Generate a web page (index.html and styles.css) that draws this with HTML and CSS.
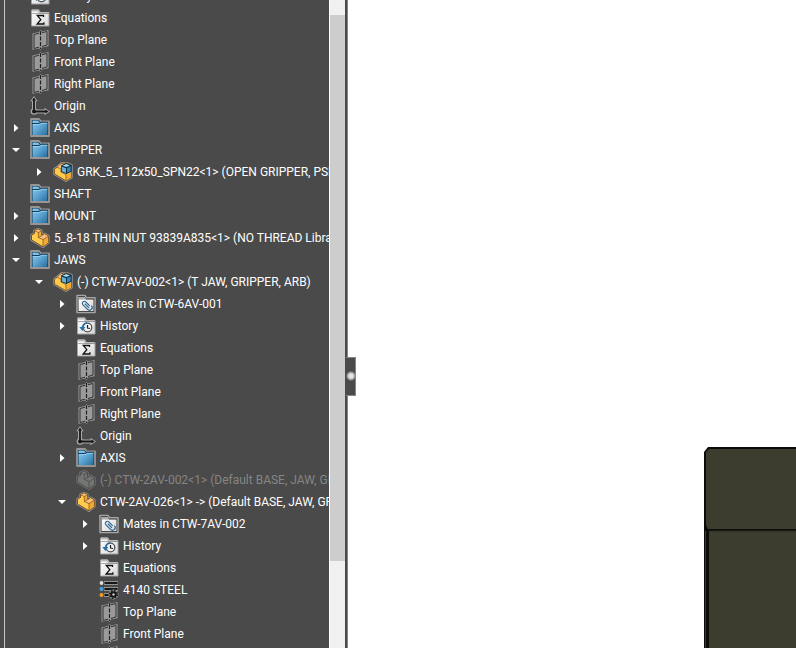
FILE: index.html
```html
<!DOCTYPE html>
<html lang="en">
<head>
<meta charset="utf-8">
<title>Assembly</title>
<link rel="stylesheet" href="styles.css">
</head>
<body>
<svg class="defs" aria-hidden="true">
  <defs>
    <linearGradient id="blue" x1="0" y1="0" x2="1" y2="1">
      <stop offset="0" stop-color="#8fcdf0"/><stop offset=".5" stop-color="#5aa3d0"/><stop offset="1" stop-color="#2b6c9c"/>
    </linearGradient>
    <linearGradient id="paper" x1="0" y1="0" x2="1" y2="1">
      <stop offset="0" stop-color="#ffffff"/><stop offset="1" stop-color="#d8d8d8"/>
    </linearGradient>
    <symbol id="right" viewBox="0 0 8 10"><path d="M2 1l4.500 4L2 9z" fill="#fff"/></symbol>
    <symbol id="down" viewBox="0 0 8 10"><path d="M0 3h8L4 7z" fill="#fff"/></symbol>
    <symbol id="folder" viewBox="0 0 20 20">
      <path d="M1 1h8l2 2.500h8V18H1z" fill="#0c2c44" stroke="#969696" stroke-width="1.800" stroke-linejoin="round"/>
      <path d="M2.500 2.500h5.800L10 5h7.500v12h-15z" fill="url(#blue)"/>
      <path d="M2 5.500h7.500l1.500-1.300h7" fill="none" stroke="#123d5b"/>
      <path d="M3 6.500h7l1.300-1.200h6" fill="none" stroke="#a4dbf6" stroke-width=".7"/>
    </symbol>
    <symbol id="sheet" viewBox="0 0 20 20">
      <path d="M1.500 2h7l1.500 2.500h9V18H1.500z" fill="url(#paper)" stroke="#a2a2a2"/>
      <path d="M2 2.500h6.300L10 5h8.500" fill="none" stroke="#bcbcbc" stroke-width="2"/>
      <path d="M2 5.500h17" stroke="#858585" stroke-width=".7"/>
    </symbol>
    <symbol id="equations" viewBox="0 0 20 20">
      <use href="#sheet"/>
      <path d="M13.500 9V7.500H7.300l3.500 4.200-3.700 4.300h6.800v-1.700" fill="none" stroke="#111" stroke-width="1.300"/>
    </symbol>
    <symbol id="history" viewBox="0 0 20 20">
      <use href="#sheet"/>
      <circle cx="11.500" cy="11.500" r="4.300" fill="#f4f4f4" stroke="#4a5359" stroke-width="1.300"/>
      <path d="M6.800 13A4.800 4.800 0 0 1 11 6.700" fill="none" stroke="#2874a8" stroke-width="1.600"/>
      <path d="M3.300 11h6l-3 4z" fill="#2874a8"/>
      <path d="M11.500 9v3l2.500.5" fill="none" stroke="#222" stroke-width="1.200"/>
    </symbol>
    <symbol id="mates" viewBox="0 0 20 20">
      <path d="M1 1.500h8l1.500 2.300H19V18.500H1z" fill="#292929" stroke="#a6a6a6" stroke-width="1.500" stroke-linejoin="round"/>
      <path d="M2.500 3h6L10 5.500h7.500V17h-15z" fill="url(#paper)"/>
      <path d="M2.500 3h6L10 5.500H3z" fill="#aaa"/>
      <g fill="none" stroke="#24608e" stroke-width="1.100" transform="rotate(45 10.500 11.500)">
        <path d="M13 9.500H7.500a2 2 0 0 0 0 4h6.500a2.700 2.700 0 0 0 0-5.400M14 11.500H8"/>
      </g>
    </symbol>
    <symbol id="plane" viewBox="0 0 20 20">
      <path d="M2.500 3.500L9 2l1.500-2L12 1.500 18.500 0v16.300L12 17.500 10.500 20 9 18.500l-6.500 1.300z" fill="#9a9a9a"/>
      <path d="M9 3.300L4 4.500v14l5-1.300M12 2.700l5-1.200v13.500l-5 1.500" fill="none" stroke="#303030"/>
      <path d="M10.500 1v18" stroke="#202020" stroke-width="1.200" stroke-dasharray="4 1.500"/>
    </symbol>
    <symbol id="origin" viewBox="0 0 20 20">
      <path d="M4 4v11.500h12" fill="none" stroke="#a8a8a8" stroke-width="4" stroke-linejoin="round"/>
      <path d="M4 0L.300 5.200h7.400zM20 15.500l-5.500-3.700v7.400z" fill="#a8a8a8"/>
      <circle cx="4" cy="15.500" r="3.300" fill="#a8a8a8"/>
      <path d="M4 4v11.500h12" fill="none" stroke="#171717" stroke-width="1.800"/>
      <path d="M4 1.600L2 4.500h4zM18.500 15.500l-3-2v4z" fill="#171717"/>
      <circle cx="4" cy="15.500" r="2" fill="#171717"/>
    </symbol>
    <symbol id="part" viewBox="0 0 20 20">
      <path d="M1.500 7L4.500 5.500V2.500L8 1l3.500 1.500V7l3-1.300 4 2.300v6.500L13 18.800 1.500 12z" fill="#ffcb4d" stroke="#999" stroke-width="2.200" stroke-linejoin="round"/>
      <path d="M1.500 7L4.500 5.500V2.500L8 1l3.500 1.500V7l3-1.300 4 2.300v6.500L13 18.800 1.500 12z" fill="#ffcb4d" stroke="#6b4314" stroke-width=".9" stroke-linejoin="round"/>
      <path d="M5 2.800l3-1.300 3 1.300-2.700 1.600zM9 9.500l5.300-3.200L18 8.300l-5 3.200z" fill="#f7bd83"/>
      <path d="M8.300 4.500l3-1.500v4.500L8.300 9.300zM13 11.700l5.200-3.400v6L13 18.400z" fill="#efaa35"/>
      <path d="M4.700 2.700l3.600 1.900v4.900L13 11.600v6.800M8.300 4.600l3.200-1.800M13 11.600l5.200-3.300M8.500 9.500l5-3" fill="none" stroke="#7b4c17" stroke-width=".7"/>
    </symbol>
    <symbol id="ghost" viewBox="0 0 20 20">
      <path d="M1.500 7L4.500 5.500V2.500L8 1l3.500 1.500V7l3-1.300 4 2.300v6.500L13 18.800 1.500 12z" fill="#737673" stroke="#777" stroke-width="2.200" stroke-linejoin="round"/>
      <path d="M1.500 7L4.500 5.500V2.500L8 1l3.500 1.500V7l3-1.300 4 2.300v6.500L13 18.800 1.500 12z" fill="#737673" stroke="#484848" stroke-width=".9" stroke-linejoin="round"/>
      <path d="M4.700 2.700l3.600 1.900v4.900L13 11.600v6.800M8.300 4.600l3.200-1.800M13 11.600l5.200-3.300M8.500 9.500l5-3" fill="none" stroke="#4b4b4b" stroke-width=".8"/>
    </symbol>
    <symbol id="assembly" viewBox="0 0 20 20">
      <path d="M1.500 7L4.500 5 8.500 1.500l5-.5L18.500 3v12.500L13 18.800 1.500 12z" fill="#ffcb4d" stroke="#999" stroke-width="2.400" stroke-linejoin="round"/>
      <path d="M1.500 7L4.500 5 8.500 1.500l5-.5L18.500 3v12.500L13 18.800 1.500 12z" fill="#ffcb4d" stroke="#6b4314" stroke-width=".8" stroke-linejoin="round"/>
      <path d="M4.500 5l4-3.200v3.700z" fill="#f7bd83"/>
      <path d="M13 13l5.200-2.500v4.800L13 18.400z" fill="#efaa35"/>
      <path d="M4.500 5.300L8 7v3l5 2.500v6" fill="none" stroke="#7b4c17" stroke-width=".7"/>
      <path d="M8.200 3.300L13.200 1l5.300 2v6.700L13.500 12l-5.300-2z" fill="#082f48"/>
      <path d="M9.500 3.700l3.800-1.600 3.600 1.300-3.500 1.500z" fill="#a8d9ee"/>
      <path d="M9 4.700l4 1.500v4.700L9 9.400z" fill="#68aed5"/>
      <path d="M14 6l3.700-1.700v4.600L14 10.700z" fill="#3a82b0"/>
    </symbol>
    <symbol id="material" viewBox="0 0 20 20">
      <path d="M5 3h14M5 9h14M5 15h8" stroke="#929292" stroke-width="4"/>
      <path d="M5.500 3h13M5.500 9h13M5.500 15H12" stroke="#161616" stroke-width="2"/>
      <circle cx="2.500" cy="3" r="1.900" fill="#ddd"/>
      <circle cx="2.500" cy="9" r="2" fill="#4aa1e2"/>
      <circle cx="2.500" cy="15" r="2" fill="#f49a2b"/>
      <circle cx="14.500" cy="14.500" r="5" fill="#929292"/>
      <circle cx="14.500" cy="14.500" r="3.300" fill="#161616"/>
      <circle cx="14.500" cy="14.500" r="3.800" fill="none" stroke="#161616" stroke-width="1.600" stroke-dasharray="1.600 1.380"/>
      <circle cx="14.500" cy="14.500" r="1.200" fill="#c8c8c8"/>
    </symbol>
  </defs>
</svg>
<div class="app">
  <aside class="panel">
    <nav class="viewport" aria-label="Feature tree">
      <ul class="tree">
        <li><div class="row"><svg class="icon"><use href="#history"/></svg><span>History</span></div></li>
        <li><div class="row"><svg class="icon"><use href="#equations"/></svg><span>Equations</span></div></li>
        <li><div class="row"><svg class="icon"><use href="#plane"/></svg><span>Top Plane</span></div></li>
        <li><div class="row"><svg class="icon"><use href="#plane"/></svg><span>Front Plane</span></div></li>
        <li><div class="row"><svg class="icon"><use href="#plane"/></svg><span>Right Plane</span></div></li>
        <li><div class="row"><svg class="icon"><use href="#origin"/></svg><span>Origin</span></div></li>
        <li><div class="row"><button class="toggle" aria-label="Expand"><svg><use href="#right"/></svg></button><svg class="icon"><use href="#folder"/></svg><span>AXIS</span></div></li>
        <li><div class="row"><button class="toggle" aria-label="Collapse"><svg><use href="#down"/></svg></button><svg class="icon"><use href="#folder"/></svg><span>GRIPPER</span></div>
          <ul>
            <li><div class="row"><button class="toggle" aria-label="Expand"><svg><use href="#right"/></svg></button><svg class="icon"><use href="#assembly"/></svg><span>GRK_5_112x50_SPN22&lt;1&gt; (OPEN GRIPPER, PSD</span></div></li>
          </ul>
        </li>
        <li><div class="row"><svg class="icon"><use href="#folder"/></svg><span>SHAFT</span></div></li>
        <li><div class="row"><button class="toggle" aria-label="Expand"><svg><use href="#right"/></svg></button><svg class="icon"><use href="#folder"/></svg><span>MOUNT</span></div></li>
        <li><div class="row"><button class="toggle" aria-label="Expand"><svg><use href="#right"/></svg></button><svg class="icon"><use href="#part"/></svg><span>5_8-18 THIN NUT 93839A835&lt;1&gt; (NO THREAD Library)</span></div></li>
        <li><div class="row"><button class="toggle" aria-label="Collapse"><svg><use href="#down"/></svg></button><svg class="icon"><use href="#folder"/></svg><span>JAWS</span></div>
          <ul>
            <li><div class="row"><button class="toggle" aria-label="Collapse"><svg><use href="#down"/></svg></button><svg class="icon"><use href="#assembly"/></svg><span>(-) CTW-7AV-002&lt;1&gt; (T JAW, GRIPPER, ARB)</span></div>
              <ul>
                <li><div class="row"><button class="toggle" aria-label="Expand"><svg><use href="#right"/></svg></button><svg class="icon"><use href="#mates"/></svg><span>Mates in CTW-6AV-001</span></div></li>
                <li><div class="row"><button class="toggle" aria-label="Expand"><svg><use href="#right"/></svg></button><svg class="icon"><use href="#history"/></svg><span>History</span></div></li>
                <li><div class="row"><svg class="icon"><use href="#equations"/></svg><span>Equations</span></div></li>
                <li><div class="row"><svg class="icon"><use href="#plane"/></svg><span>Top Plane</span></div></li>
                <li><div class="row"><svg class="icon"><use href="#plane"/></svg><span>Front Plane</span></div></li>
                <li><div class="row"><svg class="icon"><use href="#plane"/></svg><span>Right Plane</span></div></li>
                <li><div class="row"><svg class="icon"><use href="#origin"/></svg><span>Origin</span></div></li>
                <li><div class="row"><button class="toggle" aria-label="Expand"><svg><use href="#right"/></svg></button><svg class="icon"><use href="#folder"/></svg><span>AXIS</span></div></li>
                <li><div class="row suppressed"><svg class="icon"><use href="#ghost"/></svg><span>(-) CTW-2AV-002&lt;1&gt; (Default BASE, JAW, GRIPPER)</span></div></li>
                <li><div class="row"><button class="toggle" aria-label="Collapse"><svg><use href="#down"/></svg></button><svg class="icon"><use href="#part"/></svg><span>CTW-2AV-026&lt;1&gt; -&gt; (Default BASE, JAW, GRIPPER)</span></div>
                  <ul>
                    <li><div class="row"><button class="toggle" aria-label="Expand"><svg><use href="#right"/></svg></button><svg class="icon"><use href="#mates"/></svg><span>Mates in CTW-7AV-002</span></div></li>
                    <li><div class="row"><button class="toggle" aria-label="Expand"><svg><use href="#right"/></svg></button><svg class="icon"><use href="#history"/></svg><span>History</span></div></li>
                    <li><div class="row"><svg class="icon"><use href="#equations"/></svg><span>Equations</span></div></li>
                    <li><div class="row"><svg class="icon"><use href="#material"/></svg><span>4140 STEEL</span></div></li>
                    <li><div class="row"><svg class="icon"><use href="#plane"/></svg><span>Top Plane</span></div></li>
                    <li><div class="row"><svg class="icon"><use href="#plane"/></svg><span>Front Plane</span></div></li>
                    <li><div class="row"><svg class="icon"><use href="#plane"/></svg></div></li>
                  </ul>
                </li>
              </ul>
            </li>
          </ul>
        </li>
      </ul>
    </nav>
    <div class="scrollbar"><div class="thumb"></div></div>
  </aside>
  <main class="canvas">
    <button class="splitter" aria-label="Collapse panel"></button>
    <svg class="model" viewBox="0 0 92 201" role="img" aria-label="Gripper jaw">
      <path d="M0 201V5L4 0H92V201z" fill="#0c0d09"/>
      <path d="M2 78V5L5 2H92V82H4z" fill="#3c3c2f"/>
      <path d="M5 84H92V201H5z" fill="#3c3c2f"/>
      <path d="M5 84H92" stroke="#292a24"/>
      <path d="M1.500 84V201" stroke="#3c3c2f"/>
    </svg>
  </main>
</div>
</body>
</html>
```
FILE: styles.css
```css
* { box-sizing: border-box; }

body {
  margin: 0;
  font: 12px/22px Roboto, "Noto Sans", sans-serif;
  color: #fff;
  background: #fff;
}

.defs { position: absolute; width: 0; height: 0; }

.app { display: flex; height: 100vh; overflow: hidden; }

.panel {
  display: flex;
  flex: 0 0 348px;
  min-width: 0;
  padding-left: 4px;
  padding-right: 2px;
  background: #4a4a4a;
  border-right: 1px solid #858585;
}

.viewport {
  flex: 1;
  min-width: 0;
  overflow: hidden;
  border-left: 1px solid #c4c4c4;
  border-right: 1px solid #fff;
}

ul { margin: 0; padding: 0; list-style: none; }
.tree { margin-top: -15px; padding-left: 7px; }
.tree ul { padding-left: 23px; }

.row {
  display: grid;
  grid-template-columns: 14px 20px 1fr;
  column-gap: 4px;
  align-items: center;
  height: 22px;
  white-space: nowrap;
}
.row .icon { grid-column: 2; width: 20px; height: 20px; }
.row span { grid-column: 3; }
.suppressed { color: #858585; }

.toggle {
  display: flex;
  width: 8px;
  height: 10px;
  padding: 0;
  border: 0;
  background: none;
}
.toggle svg { width: 8px; height: 10px; }

.scrollbar { flex: 0 0 15px; padding-top: 15px; background: #f0f0f0; }
.thumb { height: 87%; max-height: 546px; background: #cdcdcd; }

.canvas { position: relative; flex: 1; min-width: 0; background: #fff; }

.splitter {
  position: absolute;
  top: 357px;
  left: -2px;
  width: 10px;
  height: 39px;
  padding: 0;
  border: 1px solid #858585;
  border-left: 0;
  background: radial-gradient(circle at 5px 18px, #e4e4e4 0 2px, #909090 4px, #4a4a4a 5px);
}

.model { position: absolute; right: 0; bottom: 0; width: 92px; height: 201px; }
```
